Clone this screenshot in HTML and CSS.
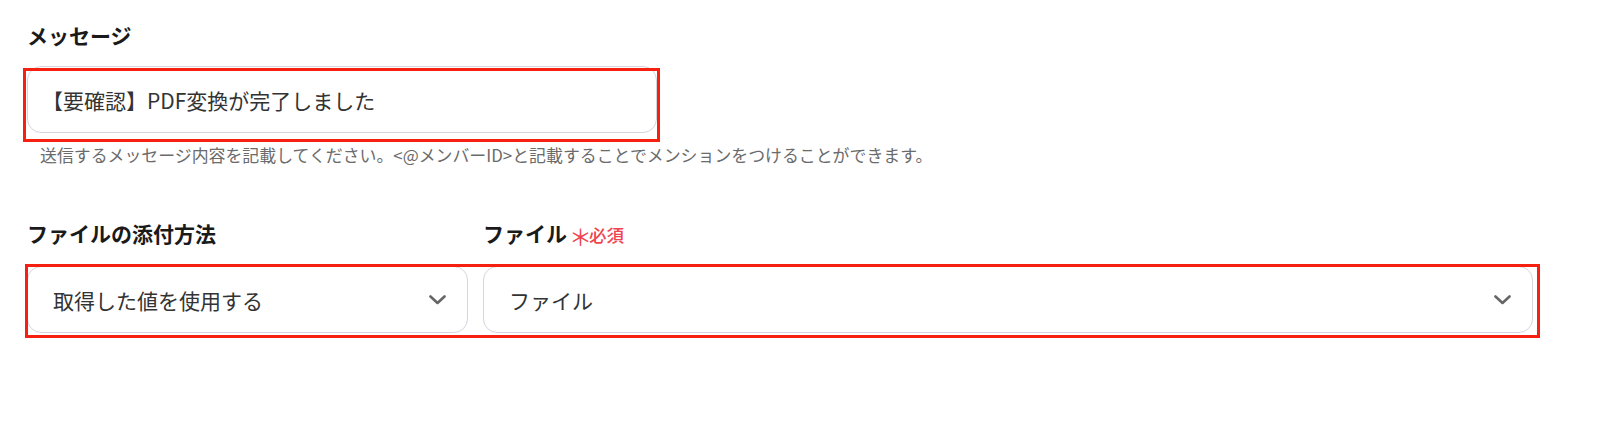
FILE: index.html
```html
<!DOCTYPE html>
<html lang="ja">
<head>
    <meta charset="UTF-8">
    <title>メッセージ設定</title>
    <link rel="stylesheet" href="styles.css">
</head>
<body>
    <div class="form">
        <div class="field">
            <div class="label">メッセージ</div>
            <div class="input-wrap marked">
                <div class="input">【要確認】PDF変換が完了しました</div>
            </div>
            <div class="help">送信するメッセージ内容を記載してください。&lt;@メンバーID&gt;と記載することでメンションをつけることができます。</div>
        </div>

        <div class="field field-files">
            <div class="row">
                <div class="label">ファイルの添付方法</div>
                <div class="label">ファイル<span class="req"><span class="star">＊</span>必須</span></div>
            </div>
            <div class="select-wrap marked-row">
                <div class="row">
                    <div class="select">
                        <span>取得した値を使用する</span>
                        <svg class="chev" width="17" height="10" viewBox="0 0 17 10"><polyline points="1.5,1.5 8.5,8 15.5,1.5" fill="none" stroke="#666" stroke-width="2.6" stroke-linecap="round" stroke-linejoin="round"/></svg>
                    </div>
                    <div class="select">
                        <span>ファイル</span>
                        <svg class="chev" width="17" height="10" viewBox="0 0 17 10"><polyline points="1.5,1.5 8.5,8 15.5,1.5" fill="none" stroke="#666" stroke-width="2.6" stroke-linecap="round" stroke-linejoin="round"/></svg>
                    </div>
                </div>
            </div>
        </div>
    </div>
</body>
</html>
```

FILE: styles.css
```css
html, body {
    min-height: 100%;
}
body {
    margin: 0;
    background-color: #fff;
    font-family: "Noto Sans CJK JP", "Noto Sans", sans-serif;
    color: #333;
}
.form {
    width: 1506px;
    padding: 21px 0 100px 27px;
}
.label {
    font-size: 21px;
    font-weight: bold;
    line-height: 28px;
    height: 28px;
    color: #1a1a1a;
}
.input-wrap {
    position: relative;
    width: 630px;
    margin-top: 17px;
}
.input {
    height: 67px;
    box-sizing: border-box;
    display: flex;
    align-items: center;
    padding: 0 0 0 14px;
    border: 1px solid #d5d5dd;
    border-radius: 14px;
    font-size: 21px;
    color: #333;
}
.marked::after {
    content: "";
    position: absolute;
    left: -4px;
    right: -3px;
    top: 2px;
    bottom: -9px;
    border: 3px solid #f5200f;
    pointer-events: none;
}
.help {
    margin-top: 10px;
    padding-left: 13px;
    font-size: 16.9px;
    line-height: 24px;
    color: #6b6b6b;
}
.field-files {
    margin-top: 52px;
}
.row {
    display: grid;
    grid-template-columns: 441px 1050px;
    column-gap: 15px;
}
.select-wrap {
    position: relative;
    margin-top: 19px;
}
.marked-row::after {
    content: "";
    position: absolute;
    left: -2px;
    right: -7px;
    top: -2px;
    bottom: -5px;
    border: 3px solid #f5200f;
    pointer-events: none;
}
.req {
    color: #f0434d;
    font-size: 17.5px;
    font-weight: 500;
    line-height: 1;
}
.star {
    display: inline-block;
    font-size: 23px;
    line-height: 1;
    font-weight: normal;
    transform: translateY(4px);
    margin: 0 -3px 0 2px;
}
.select {
    height: 67px;
    box-sizing: border-box;
    display: flex;
    align-items: center;
    justify-content: space-between;
    padding: 0 21px 0 25px;
    border: 1px solid #d5d5dd;
    border-radius: 14px;
    font-size: 21px;
    color: #333;
}
.chev {
    display: block;
}
```
